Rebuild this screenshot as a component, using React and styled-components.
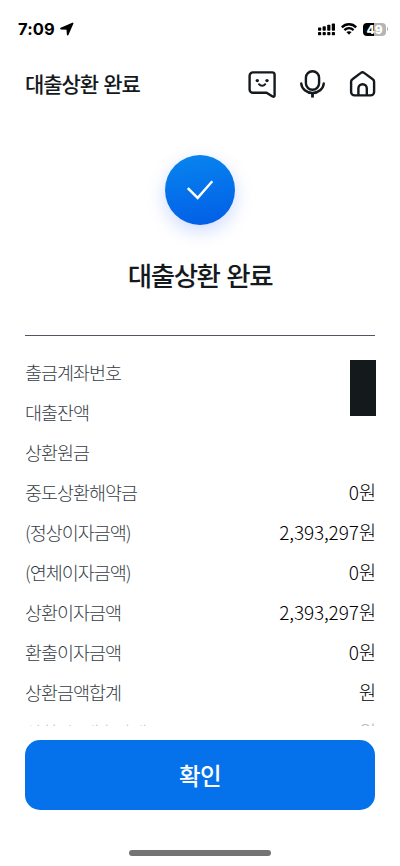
import React from 'react';
import styled, { createGlobalStyle } from 'styled-components';

const GlobalStyle = createGlobalStyle`
  * {
    box-sizing: border-box;
  }

  body {
    margin: 0;
    background-color: #ffffff;
    font-family: 'Noto Sans CJK KR', sans-serif;
  }
`;

const Screen = styled.div`
  width: 400px;
  height: 866px;
  margin: 0 auto;
  overflow: hidden;
  display: flex;
  flex-direction: column;
  background-color: #ffffff;
  color: #14191d;
`;

const StatusBar = styled.div`
  height: 58px;
  flex-shrink: 0;
  padding: 0 12px 0 18px;
  display: flex;
  align-items: center;
  justify-content: space-between;
`;

const StatusGroup = styled.div`
  display: flex;
  align-items: center;
  gap: ${(props) => props.$gap};
`;

const Time = styled.span`
  font-family: Inter, sans-serif;
  font-size: 16.5px;
  font-weight: 700;
  line-height: 20px;
  letter-spacing: 0.1px;
  color: #000000;
`;

const Battery = styled.div`
  display: flex;
  align-items: center;
  gap: 1px;

  &::after {
    content: '';
    width: 1px;
    height: 4px;
    border-radius: 0 2px 2px 0;
    background-color: #b5b5b5;
  }
`;

const BatteryLevel = styled.div`
  width: 23px;
  height: 13px;
  border-radius: 4px;
  background: linear-gradient(90deg, #000000 49%, #b5b5b5 49%);
  color: #ffffff;
  font-family: Inter, sans-serif;
  font-size: 12px;
  font-weight: 800;
  line-height: 13px;
  text-align: center;
`;

const Header = styled.header`
  height: 52px;
  flex-shrink: 0;
  padding: 0 23px 0 25px;
  display: flex;
  align-items: center;
  justify-content: space-between;
`;

const Title = styled.h1`
  margin: 0 0 3px;
  font-size: 21px;
  font-weight: 500;
  line-height: 30px;
  letter-spacing: -1.1px;
  word-spacing: 1.8px;
`;

const Actions = styled.div`
  display: flex;
  gap: 20px;
`;

const IconButton = styled.button`
  width: 30px;
  height: 30px;
  padding: 0;
  border: none;
  background-color: transparent;
  color: #14191d;
  cursor: pointer;

  svg {
    display: block;
  }
`;

const Result = styled.section`
  height: 225px;
  flex-shrink: 0;
  padding-top: 45px;
  display: flex;
  flex-direction: column;
  align-items: center;
`;

const CheckCircle = styled.div`
  width: 70px;
  height: 70px;
  border-radius: 50%;
  display: flex;
  align-items: center;
  justify-content: center;
  background: linear-gradient(170deg, #0784ef 5%, #025fe6 95%);
  box-shadow: 0 6px 18px rgba(30, 90, 255, 0.22);
`;

const ResultTitle = styled.h2`
  margin: 30px 0 0;
  font-size: 26.5px;
  font-weight: 500;
  line-height: 40px;
  letter-spacing: -1.4px;
  word-spacing: 2.2px;
`;

const Details = styled.main`
  height: 391px;
  flex-shrink: 0;
  padding: 0 24px 0 25px;
  overflow: hidden;
`;

const Rows = styled.div`
  position: relative;
  margin-right: 1px;
  padding-top: 16px;
  border-top: 1px solid #505567;
`;

const Row = styled.div`
  height: 40px;
  display: flex;
  align-items: center;
  justify-content: space-between;
  font-size: 18.5px;
  font-weight: 300;
  line-height: 40px;
  opacity: ${(props) => (props.$faded ? 0.35 : 1)};
`;

const Label = styled.span`
  color: #363d47;
  letter-spacing: -1.02px;
  word-spacing: 1.5px;
`;

const Value = styled.span`
  margin-right: -1px;
  color: #000000;
  font-size: 19px;
  letter-spacing: -0.15px;
`;

const Redaction = styled.div`
  position: absolute;
  top: 24px;
  right: -1px;
  width: 26px;
  height: 56px;
  background-color: #14191c;
`;

const Footer = styled.footer`
  flex: 1;
  padding: 14px 25px 10px;
  display: flex;
  flex-direction: column;
  align-items: center;
  justify-content: space-between;
`;

const ConfirmButton = styled.button`
  width: 100%;
  height: 70px;
  padding: 0;
  border: none;
  border-radius: 15px;
  background-color: #0572eb;
  color: #ffffff;
  font-family: inherit;
  font-size: 23.5px;
  font-weight: 500;
  letter-spacing: -0.5px;
  cursor: pointer;
`;

const HomeIndicator = styled.div`
  width: 142px;
  height: 6px;
  border-radius: 3px;
  background-color: #747474;
`;

const rows = [
  { label: '출금계좌번호' },
  { label: '대출잔액' },
  { label: '상환원금' },
  { label: '중도상환해약금', value: '0원' },
  { label: '(정상이자금액)', value: '2,393,297원' },
  { label: '(연체이자금액)', value: '0원' },
  { label: '상환이자금액', value: '2,393,297원' },
  { label: '환출이자금액', value: '0원' },
  { label: '상환금액합계', value: '원' },
  { label: '상환 후 대출잔액', value: '0원', faded: true },
];

const LocationIcon = () => (
  <svg
    width="14"
    height="14"
    viewBox="0 0 14 14"
    fill="#000000"
    stroke="#000000"
    strokeWidth="1.6"
    strokeLinejoin="round"
  >
    <path d="M12.6 1.4 1 6.6l6.2.4.5 5.8Z" />
  </svg>
);

const SignalIcon = () => (
  <svg width="17" height="13" viewBox="0 0 17 13" fill="#000000">
    <rect x="0" y="4.5" width="3.2" height="3.2" rx="0.8" />
    <rect x="4.6" y="3.2" width="3.2" height="4.5" rx="0.8" />
    <rect x="9.2" y="1.8" width="3.2" height="5.9" rx="0.8" />
    <rect x="13.8" y="0.5" width="3.2" height="7.2" rx="0.8" />
    <rect x="0" y="9" width="3.2" height="3.2" rx="0.8" />
    <rect x="4.6" y="9" width="3.2" height="3.2" rx="0.8" />
    <rect x="9.2" y="9" width="3.2" height="3.2" rx="0.8" />
    <rect x="13.8" y="9" width="3.2" height="3.2" rx="0.8" />
  </svg>
);

const WifiIcon = () => (
  <svg width="16" height="12" viewBox="0 0 16 12" fill="none" stroke="#000000">
    <path d="M.8 4.3C4.8.2 11.2.2 15.2 4.3" strokeWidth="2.4" />
    <path d="M3.4 7.1c2.6-2.6 6.6-2.6 9.2 0" strokeWidth="2.2" />
    <path d="M5.4 9.1c1.4-1.3 3.8-1.3 5.2 0L8 11.7Z" fill="#000000" stroke="none" />
  </svg>
);

const ChatIcon = () => (
  <svg
    width="30"
    height="30"
    viewBox="0 0 30 30"
    fill="none"
    stroke="currentColor"
    strokeWidth="2.4"
    strokeLinecap="round"
    strokeLinejoin="round"
  >
    <path d="M6 3.4h19.2a2.4 2.4 0 0 1 2.4 2.4v20.4c0 1.4-.8 1.8-2 1.3l-6-3.7H6a3.4 3.4 0 0 1-3.4-3.4V6.8A3.4 3.4 0 0 1 6 3.4Z" />
    <path d="M12 15.2c1.6 2.2 4.6 2.2 6.2 0" strokeWidth="2" />
    <circle cx="10.3" cy="11.6" r="1.7" fill="currentColor" stroke="none" />
    <circle cx="20" cy="11.6" r="1.7" fill="currentColor" stroke="none" />
  </svg>
);

const MicIcon = () => (
  <svg
    width="30"
    height="30"
    viewBox="0 0 30 30"
    fill="none"
    stroke="currentColor"
    strokeWidth="2.4"
    strokeLinecap="round"
  >
    <rect x="8.9" y="2.2" width="13.2" height="18.6" rx="6.6" />
    <path d="M4.2 14.4c.5 5.5 5.4 9.6 11.3 9.6s10.8-4.1 11.3-9.6" />
    <path d="M15.5 24v4.6" strokeWidth="2.8" strokeLinecap="butt" />
  </svg>
);

const HomeIcon = () => (
  <svg
    width="30"
    height="30"
    viewBox="0 0 30 30"
    fill="none"
    stroke="currentColor"
    strokeWidth="2.4"
    strokeLinejoin="round"
  >
    <path d="M13.9 3.9 5.4 10.2a3 3 0 0 0-1.3 2.5v10.2A3.5 3.5 0 0 0 7.6 26.4h16a3.5 3.5 0 0 0 3.5-3.5V12.7a3 3 0 0 0-1.3-2.5l-8.7-6.3a2.6 2.6 0 0 0-3.2 0Z" />
    <path d="M11.4 26.4v-7a4.2 4.2 0 0 1 8.4 0v7" />
  </svg>
);

const CheckIcon = () => (
  <svg
    width="30"
    height="30"
    viewBox="0 0 30 30"
    fill="none"
    stroke="#ffffff"
    strokeWidth="2.4"
    strokeLinecap="square"
  >
    <path d="m3.6 13.9 9.1 9L26.5 7.2" />
  </svg>
);

const App = () => {
  return (
    <>
      <GlobalStyle />
      <Screen>
        <StatusBar>
          <StatusGroup $gap="5px">
            <Time>7:09</Time>
            <LocationIcon />
          </StatusGroup>
          <StatusGroup $gap="6px">
            <SignalIcon />
            <WifiIcon />
            <Battery>
              <BatteryLevel>49</BatteryLevel>
            </Battery>
          </StatusGroup>
        </StatusBar>
        <Header>
          <Title>대출상환 완료</Title>
          <Actions>
            <IconButton aria-label="챗봇">
              <ChatIcon />
            </IconButton>
            <IconButton aria-label="음성">
              <MicIcon />
            </IconButton>
            <IconButton aria-label="홈">
              <HomeIcon />
            </IconButton>
          </Actions>
        </Header>
        <Result>
          <CheckCircle>
            <CheckIcon />
          </CheckCircle>
          <ResultTitle>대출상환 완료</ResultTitle>
        </Result>
        <Details>
          <Rows>
            {rows.map((row) => (
              <Row key={row.label} $faded={row.faded}>
                <Label>{row.label}</Label>
                {row.value && <Value>{row.value}</Value>}
              </Row>
            ))}
            <Redaction />
          </Rows>
        </Details>
        <Footer>
          <ConfirmButton>확인</ConfirmButton>
          <HomeIndicator />
        </Footer>
      </Screen>
    </>
  );
};

export default App;
